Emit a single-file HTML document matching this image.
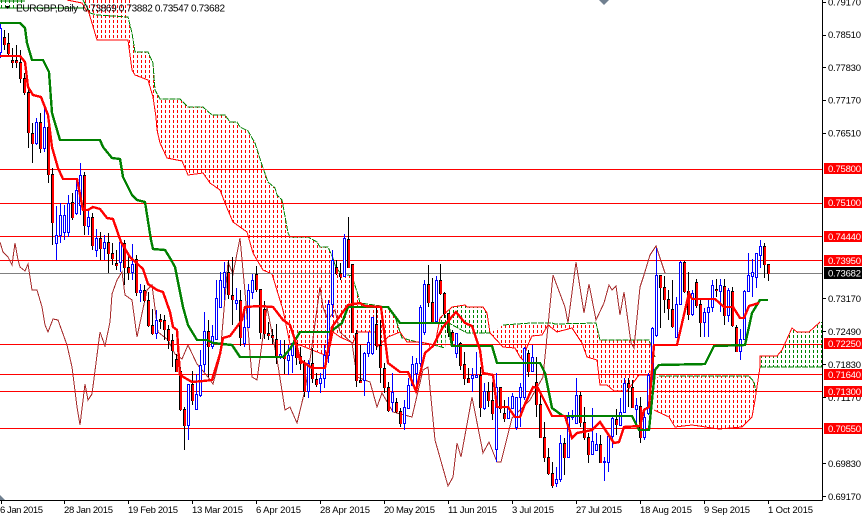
<!DOCTYPE html>
<html lang="en"><head><meta charset="utf-8"><title>EURGBP,Daily</title>
<style>html,body{margin:0;padding:0;background:#fff;width:862px;height:517px;overflow:hidden}svg{display:block;font-family:"Liberation Sans",sans-serif}</style></head>
<body>
<svg width="862" height="517" viewBox="0 0 862 517" xmlns="http://www.w3.org/2000/svg">
<defs>
<clipPath id="cr">
<polygon points="83,0 131,0 128,17 132,33 135,52 148,52 153,63 155,90 160,99 180,99 188,107 203,107 212,115 225,115 230,122 237,122 240,127 248,131 255,143 262,165 268,182 275,188 277,195 282,200 288,233 290,237 308,237 317,242 320,247 328,247 333,258 335,265 340,273 352,276 358,295 360,303 388,307 395,317 402,338 417,342 435,345 430,347 420,342 407,342 400,332 388,337 377,347 376,332 357,332 353,343 340,337 333,332 330,347 325,355 312,350 300,345 290,344 283,310 272,274 263,270 257,260 253,253 247,232 233,222 227,208 220,190 210,183 203,173 188,175 182,161 167,158 160,143 157,130 156,117 153,97 148,80 135,75 132,70 128,40 97,40 92,23 88,10"/>
<polygon points="490,333 503,325 531,323 552,323 555,324 596,323 600,340 649,340 655,357 652,375 639,375 627,391 614,391 607,385 600,385 597,360 587,357 582,343 572,328 557,332 548,325 542,335 532,336 527,347 523,360 520,357 515,348 503,347"/>
<polygon points="659,376 749,376 754,382 756,392 755,400 752,417 742,427 719,429 692,425 675,427 669,417 654,410 654,380"/>
</clipPath>
<clipPath id="cg">
<polygon points="0,0 25,0 25,8 0,8"/>
<polygon points="435,345 440,318 452,307 465,305 467,307 483,307 487,313 490,333 467,333 447,322 445,348"/>
<polygon points="760,356 777,356 782,350 792,328 797,332 809,332 820,322 822,322 822,367 760,367"/>
</clipPath>
<path id="rb" d="M3.5 37.5h2V44.5h-2zM7.5 43.5h2V53.5h-2zM11.5 60.5h2V62.5h-2zM15.5 60.5h2V62.5h-2zM19.5 62.5h2V78.5h-2zM23.5 78.5h2V92.5h-2zM27.5 92.5h2V132.5h-2zM31.5 133.5h2V143.5h-2zM39.5 122.5h2V148.5h-2zM47.5 127.5h2V174.5h-2zM51.5 174.5h2V222.5h-2zM71.5 202.5h2V217.5h-2zM83.5 175.5h2V225.5h-2zM91.5 217.5h2V245.5h-2zM99.5 238.5h2V248.5h-2zM107.5 242.5h2V253.5h-2zM111.5 253.5h2V258.5h-2zM115.5 263.5h2V265.5h-2zM123.5 243.5h2V267.5h-2zM127.5 267.5h2V272.5h-2zM135.5 259.5h2V292.5h-2zM143.5 290.5h2V300.5h-2zM147.5 300.5h2V325.5h-2zM151.5 325.5h2V333.5h-2zM159.5 319.5h2V321.5h-2zM163.5 320.5h2V329.5h-2zM167.5 329.5h2V340.5h-2zM171.5 340.5h2V350.5h-2zM175.5 359.5h2V371.5h-2zM179.5 371.5h2V409.5h-2zM183.5 409.5h2V425.5h-2zM191.5 384.5h2V400.5h-2zM207.5 331.5h2V346.5h-2zM227.5 272.5h2V294.5h-2zM231.5 295.5h2V299.5h-2zM239.5 300.5h2V337.5h-2zM255.5 274.5h2V289.5h-2zM259.5 289.5h2V332.5h-2zM263.5 309.5h2V333.5h-2zM267.5 333.5h2V335.5h-2zM271.5 335.5h2V337.5h-2zM275.5 339.5h2V357.5h-2zM283.5 355.5h2V358.5h-2zM295.5 343.5h2V357.5h-2zM299.5 356.5h2V363.5h-2zM303.5 363.5h2V391.5h-2zM311.5 363.5h2V378.5h-2zM315.5 379.5h2V384.5h-2zM335.5 267.5h2V273.5h-2zM339.5 273.5h2V276.5h-2zM347.5 239.5h2V267.5h-2zM351.5 264.5h2V332.5h-2zM355.5 333.5h2V380.5h-2zM359.5 380.5h2V382.5h-2zM375.5 324.5h2V345.5h-2zM379.5 345.5h2V367.5h-2zM383.5 368.5h2V387.5h-2zM387.5 387.5h2V410.5h-2zM395.5 402.5h2V411.5h-2zM399.5 411.5h2V423.5h-2zM427.5 284.5h2V302.5h-2zM431.5 302.5h2V321.5h-2zM439.5 280.5h2V293.5h-2zM443.5 293.5h2V313.5h-2zM447.5 313.5h2V332.5h-2zM451.5 332.5h2V340.5h-2zM459.5 343.5h2V365.5h-2zM463.5 364.5h2V378.5h-2zM467.5 378.5h2V382.5h-2zM479.5 375.5h2V407.5h-2zM487.5 391.5h2V400.5h-2zM491.5 400.5h2V413.5h-2zM499.5 387.5h2V408.5h-2zM503.5 413.5h2V418.5h-2zM527.5 353.5h2V371.5h-2zM535.5 382.5h2V404.5h-2zM539.5 404.5h2V437.5h-2zM543.5 437.5h2V457.5h-2zM547.5 457.5h2V473.5h-2zM551.5 473.5h2V485.5h-2zM563.5 443.5h2V457.5h-2zM579.5 395.5h2V422.5h-2zM583.5 422.5h2V437.5h-2zM587.5 437.5h2V454.5h-2zM599.5 444.5h2V462.5h-2zM615.5 419.5h2V424.5h-2zM627.5 383.5h2V387.5h-2zM631.5 387.5h2V407.5h-2zM639.5 406.5h2V437.5h-2zM659.5 275.5h2V287.5h-2zM663.5 287.5h2V299.5h-2zM667.5 299.5h2V308.5h-2zM671.5 309.5h2V326.5h-2zM683.5 262.5h2V291.5h-2zM687.5 291.5h2V314.5h-2zM695.5 282.5h2V305.5h-2zM699.5 304.5h2V322.5h-2zM715.5 289.5h2V290.5h-2zM723.5 286.5h2V315.5h-2zM731.5 291.5h2V325.5h-2zM735.5 327.5h2V351.5h-2zM763.5 246.5h2V264.5h-2zM767.5 264.5h2V273.5h-2z"/>
</defs>
<rect width="862" height="517" fill="#fff"/>
<!-- cloud hatching: vertical stripes, broken by white bands, clipped to cloud shapes -->
<g shape-rendering="crispEdges" fill="none">
<g clip-path="url(#cr)">
<path d="M1 250H822" stroke="#f00" stroke-width="500" stroke-dasharray="1 3"/>
<path d="M411 3V500" stroke="#fff" stroke-width="822" stroke-dasharray="2 3"/>
</g>
<g clip-path="url(#cg)">
<path d="M1 250H822" stroke="#008000" stroke-width="500" stroke-dasharray="1 3"/>
<path d="M411 3V500" stroke="#fff" stroke-width="822" stroke-dasharray="2 3"/>
</g>
</g>
<g fill="none" stroke-width="1" shape-rendering="crispEdges">
<path stroke="#008000" stroke-dasharray="6 1" d="M83 0L90 13L97 15L128 17L132 33L135 52L148 52L153 63L155 90L160 99L180 99L188 107L203 107L212 115L225 115L230 122L237 122L240 127L248 131L255 143L262 165L268 182L275 188L277 195L282 200L288 233L290 237L308 237L317 242L320 247L328 247L333 258L335 265L340 273L352 276L358 295L360 303L388 307L395 317L402 338L417 342L430 344L445 348"/>
<path stroke="#f00" d="M88 10L92 23L97 40L128 40L132 70L135 75L148 80L153 97L156 117L157 130L160 143L167 158L182 161L188 175L203 173L210 183L220 190L227 208L233 222L247 232L253 253L257 260L263 270L272 274L283 310L290 344L300 345L312 350L325 355L330 347L333 332L340 337L353 343L357 332L376 332L377 347L388 337L400 332L407 342L420 342L435 345L440 318L452 307L465 305L467 307L483 307L487 313L490 333L503 347L515 348L520 357L523 360L527 347L532 336L542 335L548 325L557 332L572 328L582 343L587 357L597 360L600 385L607 385L614 391L627 391L639 375L654 375M654 410L669 417L675 427L692 425L719 429L742 427L752 417L755 400L760 367L760 356L777 356L782 350L792 328L797 332L809 332L820 322"/>
<path stroke="#008000" stroke-dasharray="6 1" d="M503 325L531 323L552 323L555 324L596 323L600 340L649 340L655 357M659 376L749 376L754 382L756 392M760 367L822 367M447 322L467 333L490 333"/>
<path stroke="#008000" d="M0 8H85M0 1H25"/>
<path stroke="#f00" d="M67 0L82 3L85 8L87 12"/>
</g>
<!-- horizontal levels -->
<g stroke="#f00" stroke-width="1" shape-rendering="crispEdges">
<path d="M0 169.5H822M0 203.5H822M0 236.5H822M0 260.5H822M0 344.5H822M0 374.5H822M0 391.5H822M0 428.5H822"/>
<path stroke="#808080" d="M0 273.5H822"/>
</g>
<!-- chikou -->
<path fill="none" stroke="#a52a2a" stroke-width="1" shape-rendering="crispEdges" d="M0 242L3 252L8 257L12 265L15 243L18 260L20 267L25 271L28 264L32 290L37 290L42 307L45 325L48 332L53 319L58 320L67 345L72 367L77 407L80 425L85 384L88 400L92 394L100 332L105 346L110 322L112 294L117 280L122 272L125 295L132 300L137 337L147 290L152 285L158 332L168 340L175 354L182 359L188 345L197 364L208 377L213 384L220 357L228 262L233 274L240 238L245 292L252 377L257 380L267 307L277 359L285 410L290 407L297 423L305 390L310 360L320 287L323 307L328 320L335 310L340 332L352 343L357 377L370 382L377 407L382 393L393 412L412 417L423 370L428 367L435 440L448 486L453 477L457 443L461 457L472 397L483 453L489 442L497 462L501 462L512 418L530 400L543 377L553 275L565 307L568 323L576 262L584 313L589 284L596 320L604 303L609 285L612 290L616 286L620 315L624 292L631 343L634 348L640 287L644 275L650 255L656 246L665 273"/>
<!-- candles -->
<g shape-rendering="crispEdges" stroke-width="1">
<path fill="none" stroke="#00f" d="M.5 24V58M36.5 118V145M44.5 106V152M56.5 206V260M60.5 203V243M64.5 205V240M68.5 195V237M76.5 180V215M80.5 163V215M88.5 210V235M96.5 229V257M104.5 235V260M120.5 240V272M132.5 244V280M140.5 284V302M156.5 310V339M188.5 384V440M196.5 374V409M200.5 350V397M204.5 312V372M212.5 325V349M216.5 280V339M220.5 272V307M224.5 262V300M236.5 288V310M244.5 307V347M248.5 284V327M252.5 274V299M280.5 340V359M288.5 345V375M292.5 343V373M308.5 360V398M320.5 373V393M324.5 345V388M328.5 300V363M332.5 250V317M344.5 234V277M364.5 352V396M368.5 332V357M372.5 317V355M392.5 373V412M404.5 400V430M408.5 378V408M412.5 356V386M416.5 358V385M420.5 305V367M424.5 280V335M436.5 276V322M456.5 333V358M472.5 368V392M476.5 352V376M484.5 383V410M496.5 373V462M508.5 397V418M512.5 393V408M516.5 397V430M520.5 383V427M524.5 347V400M532.5 345V372M556.5 467V487M560.5 435V482M568.5 412V458M572.5 410V420M576.5 378V423M592.5 408V455M596.5 433V451M604.5 457V481M608.5 435V472M612.5 415V448M620.5 398V426M624.5 378V413M636.5 398V423M644.5 408V440M648.5 373V415M652.5 327V380M656.5 248V337M676.5 297V337M680.5 261V305M692.5 290V316M704.5 308V337M708.5 298V337M712.5 280V312M720.5 279V312M728.5 288V322M740.5 329V360M744.5 290V340M748.5 253V292M752.5 259V297M756.5 253V288M760.5 240V268"/>
<path fill="none" stroke="#000" d="M4.5 30V50M8.5 33V55M12.5 48V68M16.5 45V68M20.5 50V83M24.5 73V95M28.5 89V148M32.5 123V163M40.5 113V153M48.5 122V183M52.5 168V245M72.5 193V220M84.5 172V235M92.5 213V250M100.5 232V260M108.5 233V273M112.5 243V265M116.5 250V270M124.5 240V285M128.5 255V280M136.5 255V296M144.5 285V302M148.5 292V327M152.5 309V335M160.5 314V329M164.5 315V340M168.5 325V349M172.5 334V367M176.5 354V372M180.5 367V411M184.5 407V450M192.5 371V405M208.5 320V377M228.5 260V299M232.5 257V325M240.5 290V346M256.5 266V292M260.5 289V339M264.5 301V339M268.5 322V340M272.5 329V344M276.5 324V364M284.5 340V374M296.5 342V365M300.5 347V370M304.5 360V397M312.5 348V383M316.5 373V387M336.5 260V275M340.5 263V280M348.5 217V268M352.5 264V332M356.5 330V387M360.5 345V382M376.5 307V350M380.5 320V383M384.5 363V393M388.5 382V412M396.5 398V413M400.5 408V427M428.5 265V307M432.5 278V323M440.5 264V295M444.5 292V318M448.5 313V337M452.5 330V347M460.5 342V370M464.5 352V385M468.5 368V382M480.5 367V417M488.5 382V407M492.5 382V420M500.5 387V413M504.5 400V422M528.5 350V377M536.5 357V417M540.5 392V438M544.5 422V462M548.5 448V475M552.5 462V488M564.5 438V475M580.5 392V427M584.5 407V440M588.5 433V463M600.5 435V462M616.5 409V435M628.5 378V407M632.5 380V408M640.5 397V443M660.5 275V328M664.5 276V313M668.5 290V320M672.5 280V328M684.5 261V293M688.5 272V320M696.5 279V308M700.5 298V337M716.5 279V297M724.5 279V325M732.5 287V327M736.5 325V351M764.5 243V278M768.5 264V281"/>
<path fill="#fff" stroke="#00f" d="M-.5 28.5h2V52.5h-2zM35.5 122.5h2V143.5h-2zM43.5 127.5h2V148.5h-2zM55.5 235.5h2V243.5h-2zM59.5 215.5h2V235.5h-2zM63.5 215.5h2V232.5h-2zM67.5 203.5h2V232.5h-2zM75.5 190.5h2V213.5h-2zM79.5 175.5h2V205.5h-2zM87.5 217.5h2V226.5h-2zM95.5 238.5h2V250.5h-2zM103.5 242.5h2V248.5h-2zM119.5 242.5h2V262.5h-2zM131.5 264.5h2V272.5h-2zM139.5 290.5h2V292.5h-2zM155.5 320.5h2V333.5h-2zM187.5 384.5h2V425.5h-2zM195.5 394.5h2V409.5h-2zM199.5 365.5h2V395.5h-2zM203.5 331.5h2V364.5h-2zM211.5 336.5h2V346.5h-2zM215.5 298.5h2V339.5h-2zM219.5 280.5h2V307.5h-2zM223.5 272.5h2V287.5h-2zM235.5 300.5h2V303.5h-2zM243.5 327.5h2V343.5h-2zM247.5 290.5h2V327.5h-2zM251.5 280.5h2V292.5h-2zM279.5 354.5h2V357.5h-2zM287.5 355.5h2V360.5h-2zM291.5 343.5h2V355.5h-2zM307.5 363.5h2V391.5h-2zM319.5 378.5h2V383.5h-2zM323.5 355.5h2V378.5h-2zM327.5 304.5h2V355.5h-2zM331.5 260.5h2V304.5h-2zM343.5 238.5h2V276.5h-2zM363.5 353.5h2V380.5h-2zM367.5 342.5h2V353.5h-2zM371.5 317.5h2V353.5h-2zM391.5 392.5h2V402.5h-2zM403.5 407.5h2V423.5h-2zM407.5 385.5h2V408.5h-2zM411.5 364.5h2V385.5h-2zM415.5 363.5h2V373.5h-2zM419.5 307.5h2V363.5h-2zM423.5 284.5h2V332.5h-2zM435.5 280.5h2V321.5h-2zM455.5 333.5h2V353.5h-2zM471.5 375.5h2V378.5h-2zM475.5 375.5h2V377.5h-2zM483.5 391.5h2V408.5h-2zM495.5 387.5h2V449.5h-2zM507.5 408.5h2V418.5h-2zM511.5 396.5h2V408.5h-2zM515.5 397.5h2V427.5h-2zM519.5 387.5h2V397.5h-2zM523.5 348.5h2V397.5h-2zM531.5 357.5h2V371.5h-2zM555.5 479.5h2V483.5h-2zM559.5 443.5h2V479.5h-2zM567.5 417.5h2V457.5h-2zM571.5 416.5h2V417.5h-2zM575.5 395.5h2V423.5h-2zM591.5 441.5h2V454.5h-2zM595.5 444.5h2V450.5h-2zM603.5 461.5h2V462.5h-2zM607.5 436.5h2V462.5h-2zM611.5 418.5h2V436.5h-2zM619.5 412.5h2V425.5h-2zM623.5 383.5h2V412.5h-2zM635.5 405.5h2V409.5h-2zM643.5 417.5h2V437.5h-2zM647.5 375.5h2V413.5h-2zM651.5 328.5h2V375.5h-2zM655.5 275.5h2V335.5h-2zM675.5 304.5h2V337.5h-2zM679.5 262.5h2V304.5h-2zM691.5 293.5h2V314.5h-2zM703.5 312.5h2V322.5h-2zM707.5 307.5h2V312.5h-2zM711.5 285.5h2V307.5h-2zM719.5 285.5h2V291.5h-2zM727.5 290.5h2V315.5h-2zM739.5 339.5h2V351.5h-2zM743.5 291.5h2V339.5h-2zM747.5 275.5h2V291.5h-2zM751.5 272.5h2V276.5h-2zM755.5 253.5h2V277.5h-2zM759.5 246.5h2V255.5h-2z"/>
<use href="#rb" fill="#000" stroke="#000"/>
<use href="#rb" transform="translate(.25 .25)" fill="#f00" stroke="none"/>
</g>
<!-- kijun / tenkan -->
<path fill="none" stroke="#008000" stroke-width="2.4" shape-rendering="crispEdges" d="M0 23L20 23L25 28L27 43L32 60L43 60L49 72L52 113L60 140L100 140L103 147L112 158L120 159L123 177L132 195L137 200L145 202L151 240L153 249L165 250L170 258L175 267L183 307L188 325L197 340L207 340L213 343L232 345L240 357L283 357L290 349L300 332L330 332L342 323L348 307L388 307L400 323L448 323L452 346L492 346L497 363L540 363L545 373L552 408L563 416L632 416L639 430L649 430L655 370L659 365L705 364L714 346L745 345L752 313L760 300L768 300"/>
<path fill="none" stroke="#f00" stroke-width="2.4" shape-rendering="crispEdges" d="M0 56L20 56L25 62L28 87L33 95L41 97L48 115L52 147L58 168L63 179L77 179L83 210L88 210L93 207L100 209L107 218L113 219L121 242L130 257L143 269L148 284L157 290L163 292L170 312L173 327L177 330L180 375L192 382L203 381L212 380L220 354L223 338L230 336L242 320L245 307L260 306L273 307L283 320L290 325L295 340L300 360L312 368L325 368L332 327L348 305L360 303L365 306L381 307L388 363L400 372L408 372L416 391L425 353L433 346L443 327L456 312L465 323L472 326L480 350L483 373L493 375L497 407L508 407L515 417L520 417L525 404L533 387L538 388L552 416L565 416L572 438L577 433L592 430L600 422L614 443L619 442L624 427L640 426L644 410L649 407L654 345L677 345L689 293L692 299L715 299L724 307L733 307L740 318L744 318L749 306L759 303"/>
<!-- axes -->
<g stroke="#000" stroke-width="1" shape-rendering="crispEdges" fill="none">
<path d="M822.5 0V500.5M0 500.5H822.5"/>
<path d="M822 2.5h4M822 35.5h4M822 67.5h4M822 100.5h4M822 133.5h4M822 298.5h4M822 331.5h4M822 364.5h4M822 397.5h4M822 463.5h4M822 496.5h4"/>
<path d="M1.5 500v4M64.5 500v4M128.5 500v4M192.5 500v4M256.5 500v4M320.5 500v4M384.5 500v4M448.5 500v4M512.5 500v4M576.5 500v4M640.5 500v4M704.5 500v4M768.5 500v4"/>
</g>
<polygon points="599,0 609,0 604,5" fill="#708090"/>
<polygon points="0,495 0,500 5,500" fill="#708090"/>
<polygon points="5,6 10,6 7.5,9" fill="#000"/>
<text x="16" y="11.5" font-size="10" textLength="209" fill="#000">EURGBP,Daily&#160;&#160;0.73869 0.73882 0.73547 0.73682</text>
<!-- price labels -->
<g font-size="9.5" fill="#000">
<text x="828" y="5.5" textLength="33">0.79170</text>
<text x="828" y="38" textLength="33">0.78510</text>
<text x="828" y="71" textLength="33">0.77830</text>
<text x="828" y="103.500" textLength="33">0.77170</text>
<text x="828" y="136.500" textLength="33">0.76510</text>
<text x="828" y="302" textLength="33">0.73170</text>
<text x="828" y="335" textLength="33">0.72490</text>
<text x="828" y="368" textLength="33">0.71830</text>
<text x="828" y="401" textLength="33">0.71170</text>
<text x="828" y="467" textLength="33">0.69830</text>
<text x="828" y="500" textLength="33">0.69170</text>
</g>
<g shape-rendering="crispEdges">
<rect x="824" y="163" width="38" height="11" fill="#f00"/>
<rect x="824" y="197" width="38" height="11" fill="#f00"/>
<rect x="824" y="231" width="38" height="11" fill="#f00"/>
<rect x="824" y="255" width="38" height="11" fill="#f00"/>
<rect x="824" y="267" width="38" height="12" fill="#000"/>
<rect x="824" y="338" width="38" height="11" fill="#f00"/>
<rect x="824" y="369" width="38" height="11" fill="#f00"/>
<rect x="824" y="386" width="38" height="11" fill="#f00"/>
<rect x="824" y="423" width="38" height="11" fill="#f00"/>
</g>
<g font-size="9.5" fill="#fff">
<text x="828" y="172" textLength="33">0.75800</text>
<text x="828" y="206" textLength="33">0.75100</text>
<text x="828" y="240" textLength="33">0.74440</text>
<text x="828" y="264" textLength="33">0.73950</text>
<text x="828" y="276.500" textLength="33">0.73682</text>
<text x="828" y="347" textLength="33">0.72250</text>
<text x="828" y="378" textLength="33">0.71640</text>
<text x="828" y="395" textLength="33">0.71300</text>
<text x="828" y="432" textLength="33">0.70550</text>
</g>
<!-- date labels -->
<g font-size="9.5" fill="#000">
<text x="0" y="513" textLength="43">6 Jan 2015</text>
<text x="64" y="513" textLength="49">28 Jan 2015</text>
<text x="128" y="513" textLength="50">19 Feb 2015</text>
<text x="192" y="513" textLength="51">13 Mar 2015</text>
<text x="256" y="513" textLength="45">6 Apr 2015</text>
<text x="320" y="513" textLength="50">28 Apr 2015</text>
<text x="384" y="513" textLength="51">20 May 2015</text>
<text x="448" y="513" textLength="49">11 Jun 2015</text>
<text x="512" y="513" textLength="42">3 Jul 2015</text>
<text x="576" y="513" textLength="46">27 Jul 2015</text>
<text x="640" y="513" textLength="52">18 Aug 2015</text>
<text x="704" y="513" textLength="46">9 Sep 2015</text>
<text x="768" y="513" textLength="45">1 Oct 2015</text>
</g>
</svg>
</body></html>
